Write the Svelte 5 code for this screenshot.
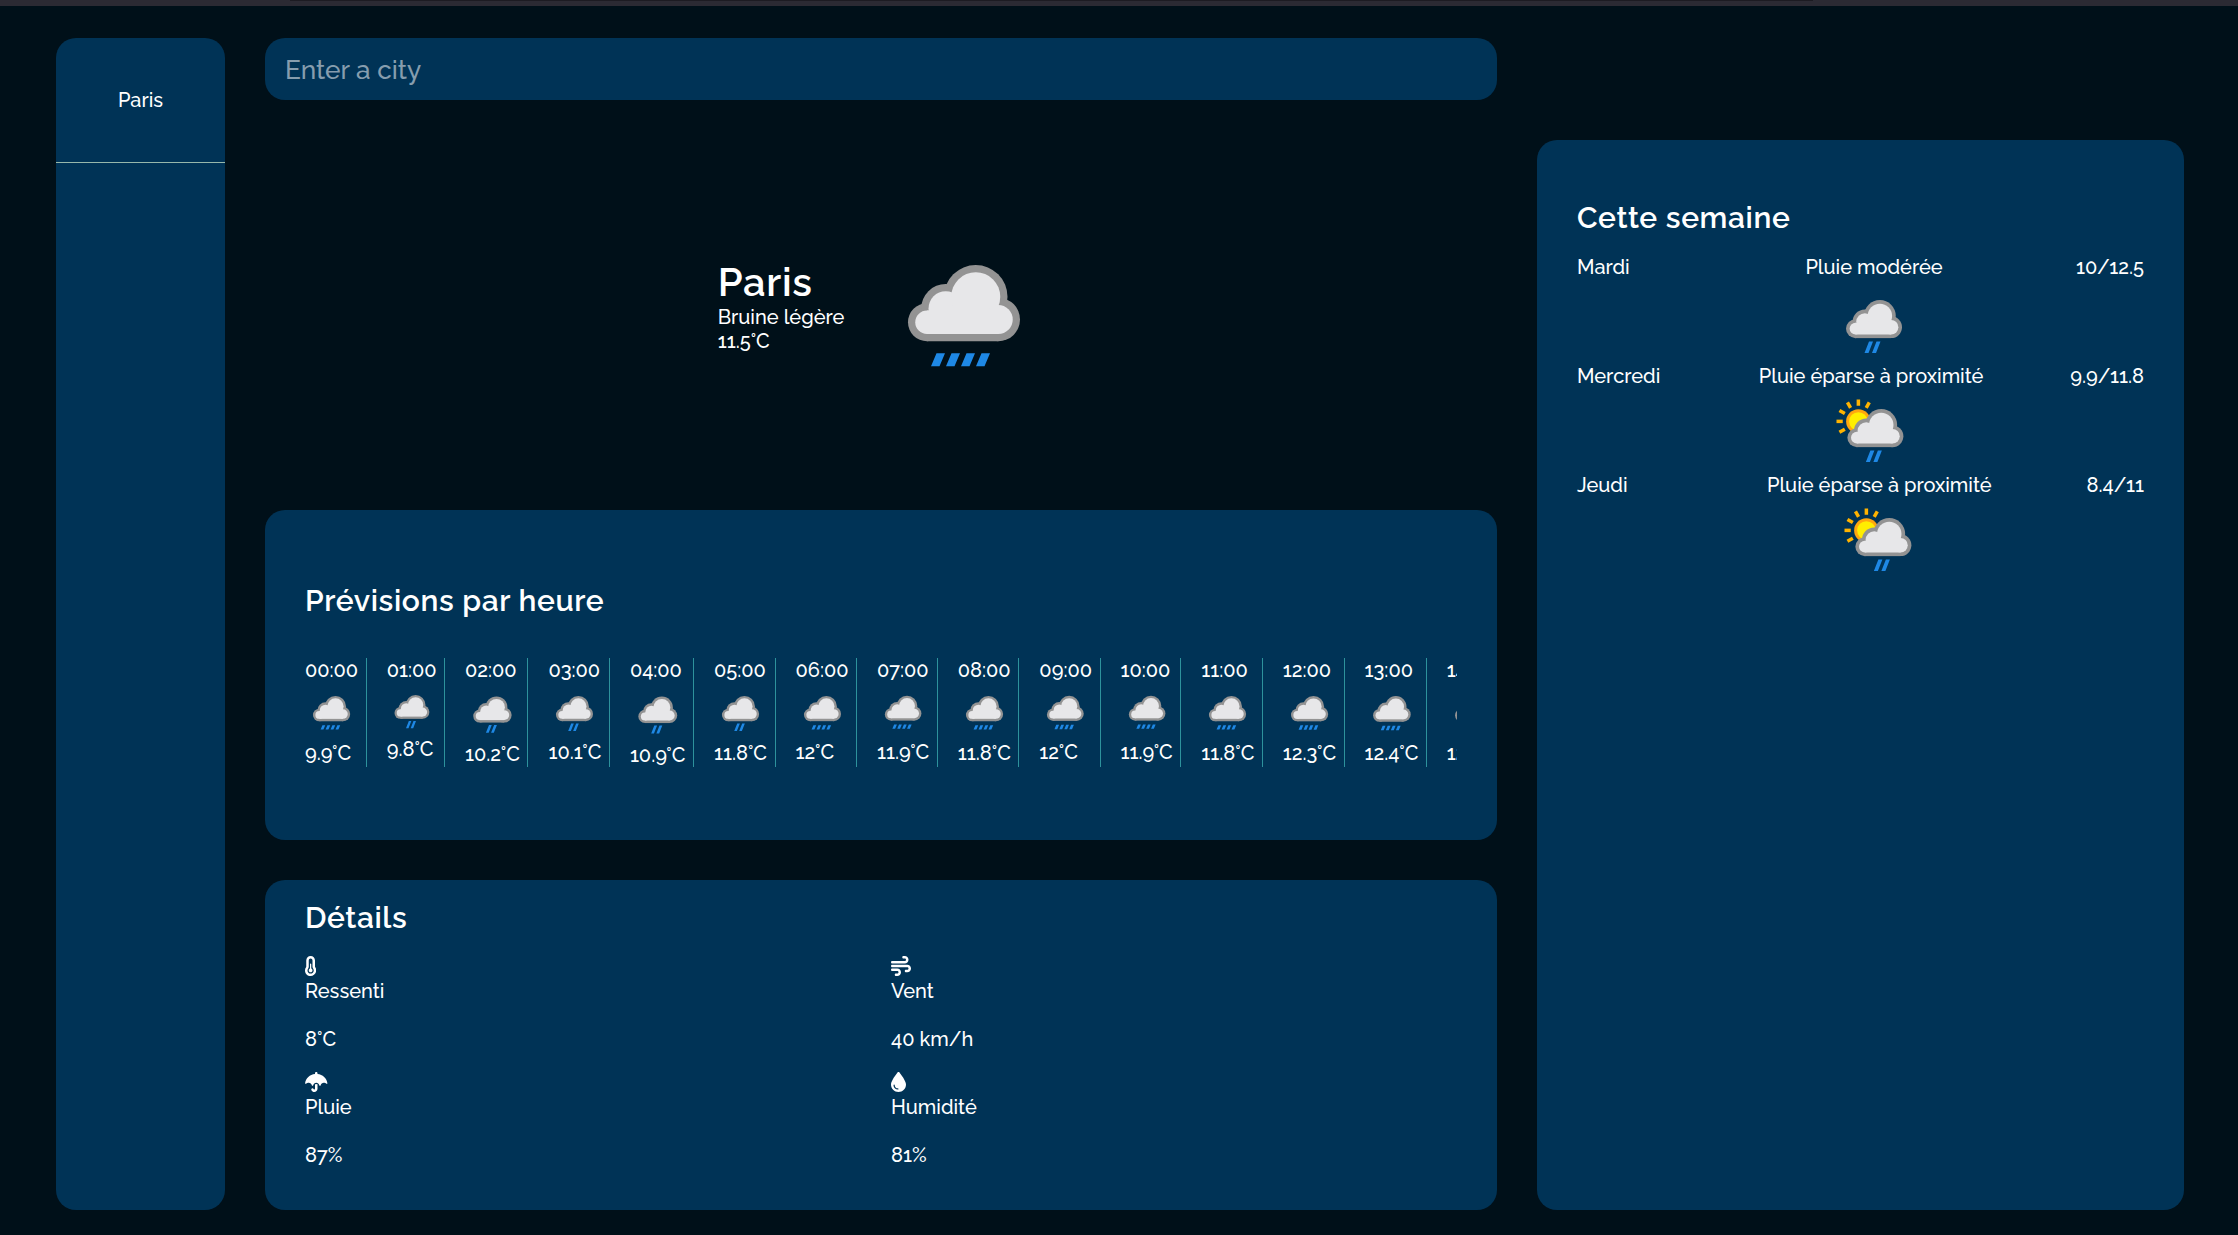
<script>
  const hours = [
    { time: '00:00', temp: '9.9', icon: 'drizzle' },
    { time: '01:00', temp: '9.8', icon: 'rain' },
    { time: '02:00', temp: '10.2', icon: 'rain' },
    { time: '03:00', temp: '10.1', icon: 'rain' },
    { time: '04:00', temp: '10.9', icon: 'rain' },
    { time: '05:00', temp: '11.8', icon: 'rain' },
    { time: '06:00', temp: '12', icon: 'drizzle' },
    { time: '07:00', temp: '11.9', icon: 'drizzle' },
    { time: '08:00', temp: '11.8', icon: 'drizzle' },
    { time: '09:00', temp: '12', icon: 'drizzle' },
    { time: '10:00', temp: '11.9', icon: 'drizzle' },
    { time: '11:00', temp: '11.8', icon: 'drizzle' },
    { time: '12:00', temp: '12.3', icon: 'drizzle' },
    { time: '13:00', temp: '12.4', icon: 'drizzle' },
    { time: '14:00', temp: '12.4', icon: 'drizzle' }
  ];

  const days = [
    { name: 'Mardi', text: 'Pluie modérée', range: '10/12.5', icon: 'rain' },
    { name: 'Mercredi', text: 'Pluie éparse à proximité', range: '9.9/11.8', icon: 'sun-rain' },
    { name: 'Jeudi', text: 'Pluie éparse à proximité', range: '8.4/11', icon: 'sun-rain' }
  ];

  const details = [
    {
      label: 'Ressenti',
      value: '8°C',
      box: '16 0 288 512',
      path: 'M160 64c-26.5 0-48 21.5-48 48V276.5c0 17.3-7.1 31.9-15.3 42.5C86.2 332.6 80 349.5 80 368c0 44.2 35.8 80 80 80s80-35.8 80-80c0-18.5-6.2-35.4-16.7-48.9c-8.2-10.6-15.3-25.2-15.3-42.5V112c0-26.5-21.5-48-48-48zM48 112C48 50.2 98.1 0 160 0s112 50.1 112 112V276.5c0 .1 .1 .3 .2 .6c.2 .6 .8 1.6 1.7 2.8c18.9 24.4 30.1 55 30.1 88.1c0 79.5-64.5 144-144 144S16 447.5 16 368c0-33.2 11.2-63.8 30.1-88.1c.9-1.2 1.5-2.2 1.7-2.8c.1-.3 .2-.5 .2-.6V112zM208 368c0 26.5-21.5 48-48 48s-48-21.5-48-48c0-20.9 13.4-38.7 32-45.3V208c0-8.8 7.2-16 16-16s16 7.2 16 16V322.7c18.6 6.6 32 24.4 32 45.3z'
    },
    {
      label: 'Vent',
      value: '40 km/h',
      box: '0 0 512 512',
      path: 'M288 32c0 17.7 14.3 32 32 32h32c17.7 0 32 14.3 32 32s-14.3 32-32 32H32c-17.7 0-32 14.3-32 32s14.3 32 32 32H352c53 0 96-43 96-96s-43-96-96-96H320c-17.7 0-32 14.3-32 32zm64 352c0 17.7 14.3 32 32 32h32c53 0 96-43 96-96s-43-96-96-96H32c-17.7 0-32 14.3-32 32s14.3 32 32 32H416c17.7 0 32 14.3 32 32s-14.3 32-32 32H384c-17.7 0-32 14.3-32 32zM128 512h32c53 0 96-43 96-96s-43-96-96-96H32c-17.7 0-32 14.3-32 32s14.3 32 32 32H160c17.7 0 32 14.3 32 32s-14.3 32-32 32H128c-17.7 0-32 14.3-32 32s14.3 32 32 32z'
    },
    {
      label: 'Pluie',
      value: '87%',
      box: '0 0 576 512',
      path: 'M288 0c17.7 0 32 14.3 32 32V49.7C451.8 63.4 557.7 161 573.9 285.9c2 15.6-17.3 24.4-27.8 12.7C532.1 283 504.8 272 480 272c-38.7 0-71 27.5-78.4 64.1c-1.7 8.7-8.7 15.6-17.6 15.9s-16.2-6-18.4-14.5C356.6 299.6 325.5 272 288 272s-68.6 27.6-77.6 65.5c-2 8.6-9.8 14.9-18.4 14.5s-15.9-7.2-17.6-15.9C167 299.5 134.7 272 96 272c-24.8 0-52.1 11-66.1 26.6C19.4 310.3 .1 301.5 2.1 285.9C18.3 161 124.2 63.4 256 49.7V32c0-17.7 14.3-32 32-32zm0 304c12.3 0 23.5 4.6 32 12.2V430.6c0 45-36.5 81.4-81.4 81.4c-30.8 0-59-17.4-72.8-45l-2.3-4.7c-7.9-15.8-1.5-35 14.3-42.9s35-1.5 42.9 14.3l2.3 4.7c3 5.9 9 9.6 15.6 9.6c9.6 0 17.4-7.8 17.4-17.4V316.2c8.5-7.6 19.7-12.2 32-12.2z'
    },
    {
      label: 'Humidité',
      value: '81%',
      box: '0 0 384 512',
      path: 'M192 512C86 512 0 426 0 320C0 228.8 130.2 57.7 166.6 11.7C172.6 4.2 181.5 0 191.1 0h1.8c9.6 0 18.5 4.2 24.5 11.7C253.8 57.7 384 228.8 384 320c0 106-86 192-192 192zM96 336c0-8.8-7.2-16-16-16s-16 7.2-16 16c0 61.9 50.1 112 112 112c8.8 0 16-7.2 16-16s-7.2-16-16-16c-44.2 0-80-35.8-80-80z'
    }
  ];
</script>

{#snippet weather(kind)}
  <svg class="weather" viewBox="0 0 64 64" aria-hidden="true">
    {#if kind === 'sun-rain'}
      <circle cx="21.9" cy="26.7" r="9.8" fill="#ffa70f" />
      <circle cx="21.9" cy="26.7" r="7.4" fill="#ffee00" />
      {#each [-120, -90, -60, -30, 0, 30] as angle}
        <rect x="20.5" y="9.2" width="2.8" height="5" fill="#ffb300" transform={`rotate(${angle} 21.9 26.7)`} />
      {/each}
    {/if}
    <g transform={kind === 'sun-rain' ? 'translate(3.5 0)' : undefined}>
      <g fill="#939393">
        <circle cx="17.2" cy="39.7" r="7.6" />
        <circle cx="24.7" cy="34.2" r="9.8" />
        <circle cx="36.7" cy="29.5" r="12.7" />
        <circle cx="45.7" cy="38.6" r="8.7" />
        <rect x="17.2" y="34" width="28.5" height="13.3" />
      </g>
      <g fill="#e7e7e9">
        <circle cx="17.2" cy="39.7" r="4.7" />
        <circle cx="24.7" cy="34.2" r="6.9" />
        <circle cx="36.7" cy="29.5" r="9.8" />
        <circle cx="45.7" cy="38.6" r="5.8" />
        <rect x="17.2" y="35" width="28.5" height="9.4" />
      </g>
      {#if kind === 'drizzle'}
        <path fill="#1e88e5" d="M21 52.1h3.4l-2.2 5.2h-3.4zm6 0h3.4l-2.2 5.2h-3.4zm6 0h3.4l-2.2 5.2h-3.4zm6 0h3.4l-2.2 5.2h-3.4z" />
      {:else}
        <path fill="#1e88e5" d="M28 50h3.2l-3.6 9.2h-3.2zm6 0h3.2l-3.6 9.2h-3.2z" />
      {/if}
    </g>
  </svg>
{/snippet}

<div class="page">
  <div class="chrome"><div class="chrome-bar"></div></div>
  <div class="layout">
    <aside class="cities panel">
      <div class="city">Paris</div>
    </aside>

    <main class="content">
      <input class="search panel" type="text" placeholder="Enter a city" />

      <section class="current">
        <div>
          <h1>Paris</h1>
          <p>Bruine légère</p>
          <p>11.5°C</p>
        </div>
        <div class="current-icon">{@render weather('drizzle')}</div>
      </section>

      <section class="hourly panel">
        <h2>Prévisions par heure</h2>
        <div class="hours">
          {#each hours as hour}
            <div class="hour">
              <p>{hour.time}</p>
              {@render weather(hour.icon)}
              <p>{hour.temp}°C</p>
            </div>
          {/each}
        </div>
      </section>

      <section class="details panel">
        <h2>Détails</h2>
        <div class="grid">
          {#each details as item}
            <div class="detail">
              <svg class="glyph" viewBox={item.box} aria-hidden="true"><path fill="currentColor" d={item.path} /></svg>
              <p>{item.label}</p>
              <p class="value">{item.value}</p>
            </div>
          {/each}
        </div>
      </section>
    </main>

    <aside class="week panel">
      <h2>Cette semaine</h2>
      {#each days as day}
        <div class="day">
          <p class="day-name">{day.name}</p>
          <div class="day-mid">
            <p>{day.text}</p>
            {@render weather(day.icon)}
          </div>
          <p>{day.range}</p>
        </div>
      {/each}
    </aside>
  </div>
</div>

<style>
  :global(body) {
    background: #001019;
  }

  .page {
    box-sizing: border-box;
    width: 100%;
    height: 1235px;
    overflow: hidden;
    background: #001019;
    color: #fff;
    font: 500 20px/24px Raleway, 'Liberation Sans', sans-serif;
  }

  .chrome {
    height: 6px;
    padding: 0 425px 0 290px;
    background: #2b2a33;
    box-sizing: border-box;
  }

  .chrome-bar {
    height: 1px;
    background: #1c1b22;
  }

  .layout {
    display: grid;
    grid-template-columns: 169px 1232px 647px;
    gap: 40px;
    height: 1172px;
    padding: 32px 0 0 56px;
  }

  .panel {
    box-sizing: border-box;
    border-radius: 20px;
    background: #003356;
  }

  h1,
  h2,
  p {
    margin: 0;
  }

  h1 {
    font-size: 40px;
    line-height: 47px;
    font-weight: 600;
    letter-spacing: 0.7px;
  }

  h2 {
    font-size: 30px;
    line-height: 35px;
    font-weight: 600;
    letter-spacing: 0.6px;
  }

  .weather {
    display: block;
    width: 100%;
    aspect-ratio: 1;
  }

  .city {
    display: flex;
    align-items: center;
    justify-content: center;
    height: 124px;
    border-bottom: 1px solid #97b8ab;
  }

  .content {
    display: grid;
    grid-template-rows: 62px 330px 330px 330px;
    row-gap: 40px;
    min-width: 0;
  }

  .search {
    width: 100%;
    padding: 0 20px;
    border: 0;
    outline: 0;
    color: #fff;
    font: 500 26.2px Raleway, 'Liberation Sans', sans-serif;
  }

  .search::placeholder {
    color: #869dae;
    opacity: 1;
  }

  .current {
    display: flex;
    align-items: center;
    justify-content: center;
    gap: 40px;
  }

  .current-icon {
    width: 160px;
    padding-bottom: 5px;
  }

  .hourly {
    display: flex;
    flex-direction: column;
    justify-content: center;
    gap: 40px;
    padding: 0 40px;
    min-width: 0;
  }

  .hours {
    display: flex;
    gap: 20px;
    height: 109px;
    overflow: hidden;
  }

  .hour {
    flex: none;
    padding-right: 7.5px;
    border-right: 1px solid #2d929c;
  }

  .hour .weather {
    width: 0;
    min-width: 100%;
    margin-bottom: 5.5px;
  }

  .details {
    padding: 20px 40px;
  }

  .grid {
    display: grid;
    grid-template-columns: 1fr 1fr;
    gap: 20px;
    margin-top: 20px;
  }

  .detail {
    height: 96px;
  }

  .glyph {
    display: block;
    height: 20px;
    margin: 1px 0 3px;
  }

  .value {
    margin-top: 24px;
  }

  .week {
    height: 1070px;
    margin-top: 102px;
    padding: 60px 40px 0;
  }

  .week h2 {
    margin-bottom: 20px;
  }

  .day {
    display: flex;
    justify-content: space-between;
    height: 109px;
  }

  .day-name {
    min-width: 95px;
  }

  .day-mid .weather {
    width: 80px;
    margin: -0.5px auto 0;
  }
</style>
